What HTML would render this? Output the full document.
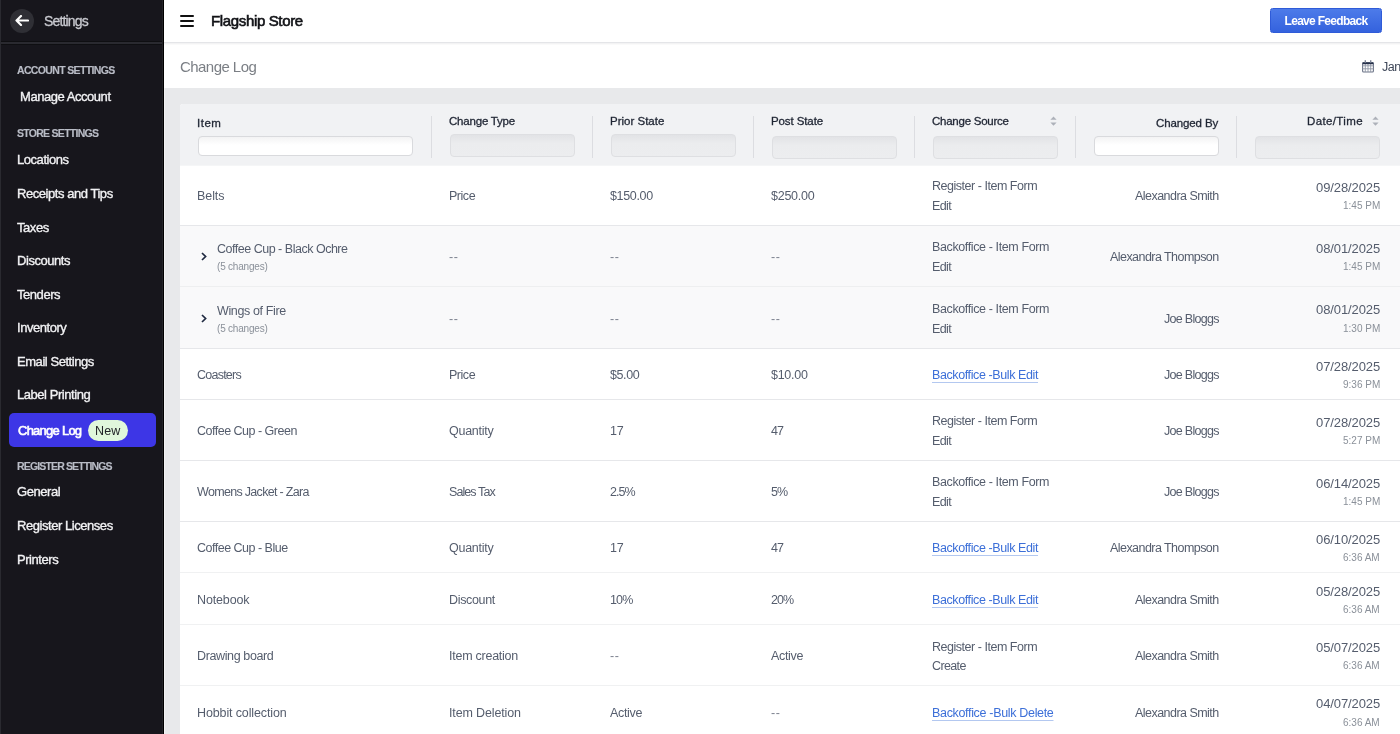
<!DOCTYPE html>
<html><head><meta charset="utf-8"><title>Change Log</title><style>
html,body{margin:0;padding:0;width:1400px;height:734px;overflow:hidden;background:#e8e9eb;}
body{position:relative;font-family:"Liberation Sans", sans-serif;}
.t{position:absolute;white-space:nowrap;will-change:transform;font-family:"Liberation Sans", sans-serif;}
</style></head>
<body>
<div style="position:absolute;left:0px;top:0px;width:164px;height:734px;background:#17161c;"></div>
<div style="position:absolute;left:162px;top:0px;width:1px;height:734px;background:#232328;"></div>
<div style="position:absolute;left:163px;top:0px;width:1px;height:734px;background:#000;"></div>
<div style="position:absolute;left:0px;top:0px;width:1px;height:734px;background:#2a2a30;"></div>
<div style="position:absolute;left:1px;top:41px;width:161px;height:1px;background:#0f0f12;"></div>
<div style="position:absolute;left:1px;top:42px;width:161px;height:2px;background:#2a2a30;"></div>
<div style="position:absolute;left:1px;top:44px;width:161px;height:1px;background:#0f0f12;"></div>
<div style="position:absolute;left:10px;top:9px;width:24px;height:24px;background:#2f2f35;border-radius:50%;"></div>
<svg style="position:absolute;left:15px;top:15px" width="14" height="11" viewBox="0 0 14 11"><path d="M6 1 L1.5 5.5 L6 10 M1.5 5.5 H13" stroke="#fff" stroke-width="2.2" fill="none" stroke-linejoin="round" stroke-linecap="round"/></svg>
<div class="t" style="top:13.819px;font-size:14px;line-height:14px;color:#c9cad0;letter-spacing:-0.85px;-webkit-text-stroke:0.3px #c9cad0;left:43.5px;">Settings</div>
<div class="t" style="top:64.614px;font-size:10.5px;line-height:10.5px;color:#b9bcc6;font-weight:700;letter-spacing:-0.65px;-webkit-text-stroke:0.15px #b9bcc6;left:17px;">ACCOUNT SETTINGS</div>
<div class="t" style="top:89.761px;font-size:13px;line-height:13px;color:#f2f2f4;letter-spacing:-0.45px;-webkit-text-stroke:0.35px #f2f2f4;left:20px;">Manage Account</div>
<div class="t" style="top:127.614px;font-size:10.5px;line-height:10.5px;color:#b9bcc6;font-weight:700;letter-spacing:-0.72px;-webkit-text-stroke:0.15px #b9bcc6;left:17px;">STORE SETTINGS</div>
<div class="t" style="top:152.761px;font-size:13px;line-height:13px;color:#f2f2f4;letter-spacing:-0.45px;-webkit-text-stroke:0.35px #f2f2f4;left:17px;">Locations</div>
<div class="t" style="top:186.761px;font-size:13px;line-height:13px;color:#f2f2f4;letter-spacing:-0.45px;-webkit-text-stroke:0.35px #f2f2f4;left:17px;">Receipts and Tips</div>
<div class="t" style="top:220.761px;font-size:13px;line-height:13px;color:#f2f2f4;letter-spacing:-0.45px;-webkit-text-stroke:0.35px #f2f2f4;left:17px;">Taxes</div>
<div class="t" style="top:253.761px;font-size:13px;line-height:13px;color:#f2f2f4;letter-spacing:-0.45px;-webkit-text-stroke:0.35px #f2f2f4;left:17px;">Discounts</div>
<div class="t" style="top:287.760px;font-size:13px;line-height:13px;color:#f2f2f4;letter-spacing:-0.45px;-webkit-text-stroke:0.35px #f2f2f4;left:17px;">Tenders</div>
<div class="t" style="top:320.760px;font-size:13px;line-height:13px;color:#f2f2f4;letter-spacing:-0.45px;-webkit-text-stroke:0.35px #f2f2f4;left:17px;">Inventory</div>
<div class="t" style="top:354.760px;font-size:13px;line-height:13px;color:#f2f2f4;letter-spacing:-0.45px;-webkit-text-stroke:0.35px #f2f2f4;left:17px;">Email Settings</div>
<div class="t" style="top:387.760px;font-size:13px;line-height:13px;color:#f2f2f4;letter-spacing:-0.45px;-webkit-text-stroke:0.35px #f2f2f4;left:17px;">Label Printing</div>
<div style="position:absolute;left:9px;top:413px;width:147px;height:34px;background:#3d36e6;border-radius:5px;"></div>
<div class="t" style="top:423.760px;font-size:13px;line-height:13px;color:#ffffff;letter-spacing:-0.75px;-webkit-text-stroke:0.6px #ffffff;left:17.5px;">Change Log</div>
<div style="position:absolute;left:88px;top:420px;width:40px;height:21px;background:#e0f7db;border-radius:11px;"></div>
<div class="t" style="top:424.731px;font-size:12.5px;line-height:12.5px;color:#222428;letter-spacing:0.1px;left:94.5px;">New</div>
<div class="t" style="top:460.614px;font-size:10.5px;line-height:10.5px;color:#b9bcc6;font-weight:700;letter-spacing:-0.85px;-webkit-text-stroke:0.15px #b9bcc6;left:17px;">REGISTER SETTINGS</div>
<div class="t" style="top:484.760px;font-size:13px;line-height:13px;color:#f2f2f4;letter-spacing:-0.45px;-webkit-text-stroke:0.35px #f2f2f4;left:17px;">General</div>
<div class="t" style="top:518.760px;font-size:13px;line-height:13px;color:#f2f2f4;letter-spacing:-0.45px;-webkit-text-stroke:0.35px #f2f2f4;left:17px;">Register Licenses</div>
<div class="t" style="top:552.760px;font-size:13px;line-height:13px;color:#f2f2f4;letter-spacing:-0.45px;-webkit-text-stroke:0.35px #f2f2f4;left:17px;">Printers</div>
<div style="position:absolute;left:164px;top:0px;width:1236px;height:42px;background:#fff;"></div>
<div style="position:absolute;left:164px;top:42px;width:1236px;height:1px;background:#e4e5e8;"></div>
<div style="position:absolute;left:180px;top:14.5px;width:14px;height:2px;background:#111;border-radius:1px;"></div>
<div style="position:absolute;left:180px;top:19.5px;width:14px;height:2px;background:#111;border-radius:1px;"></div>
<div style="position:absolute;left:180px;top:24.5px;width:14px;height:2px;background:#111;border-radius:1px;"></div>
<div class="t" style="top:12.877px;font-size:15px;line-height:15px;color:#111216;letter-spacing:-0.35px;-webkit-text-stroke:0.6px #111216;left:210.5px;">Flagship Store</div>
<div style="position:absolute;left:1270px;top:8px;width:112px;height:25px;box-sizing:border-box;border:1px solid #2f5bd8;border-radius:2.5px;background:linear-gradient(#4d7be9,#3462de);"></div>
<div class="t" style="top:14.702px;font-size:12px;line-height:12px;color:#ffffff;font-weight:700;letter-spacing:-0.7px;left:1270px;width:112px;text-align:center;">Leave Feedback</div>
<div style="position:absolute;left:164px;top:43px;width:1236px;height:45px;background:#fff;"></div>
<div style="position:absolute;left:164px;top:43px;width:1236px;height:1px;background:#f3f3f4;"></div>
<div style="position:absolute;left:164px;top:44px;width:1236px;height:1px;background:#fafafa;"></div>
<div class="t" style="top:58.877px;font-size:15px;line-height:15px;color:#7b7f85;letter-spacing:-0.55px;left:180px;">Change Log</div>
<svg style="position:absolute;left:1362px;top:59px" width="12" height="14" viewBox="0 0 12 14"><rect x="0.6" y="3.6" width="10.8" height="9.4" rx="1" fill="#fff" stroke="#6c7487" stroke-width="1.1"/><path d="M0.6 6.8H11.4M0.6 9.8H11.4M3.3 4V13M6 4V13M8.7 4V13" stroke="#8f96a5" stroke-width="0.9"/><rect x="0.6" y="3.4" width="10.8" height="1.8" fill="#25304a"/><rect x="2.6" y="1.2" width="1.4" height="2.6" fill="#7d8496"/><rect x="8" y="1.2" width="1.4" height="2.6" fill="#7d8496"/></svg>
<div class="t" style="top:60.731px;font-size:12.5px;line-height:12.5px;color:#3f4859;letter-spacing:-0.5px;left:1382px;">Jan</div>
<div style="position:absolute;left:164px;top:88px;width:1236px;height:646px;background:#e8e9eb;"></div>
<div style="position:absolute;left:164px;top:88px;width:1px;height:646px;background:#f2f2f3;"></div>
<div style="position:absolute;left:180px;top:104px;width:1220px;height:630px;background:#fff;border-top-left-radius:3px;"></div>
<div style="position:absolute;left:180px;top:104px;width:1220px;height:61px;background:#f1f2f4;border-top-left-radius:3px;"></div>
<div style="position:absolute;left:431px;top:116px;width:1px;height:41.5px;background:#dcdde1;"></div>
<div style="position:absolute;left:592px;top:116px;width:1px;height:41.5px;background:#dcdde1;"></div>
<div style="position:absolute;left:753px;top:116px;width:1px;height:41.5px;background:#dcdde1;"></div>
<div style="position:absolute;left:914px;top:116px;width:1px;height:41.5px;background:#dcdde1;"></div>
<div style="position:absolute;left:1075px;top:116px;width:1px;height:41.5px;background:#dcdde1;"></div>
<div style="position:absolute;left:1236px;top:116px;width:1px;height:41.5px;background:#dcdde1;"></div>
<div class="t" style="top:117.673px;font-size:11.5px;line-height:11.5px;color:#1f2533;letter-spacing:0.5px;-webkit-text-stroke:0.3px #1f2533;left:197px;">Item</div>
<div style="position:absolute;left:198px;top:136px;width:215px;height:19.5px;box-sizing:border-box;background:linear-gradient(#f3f3f4,#fff 45%);border:1px solid #d9dadd;border-radius:4px;"></div>
<div class="t" style="top:115.673px;font-size:11.5px;line-height:11.5px;color:#1f2533;letter-spacing:-0.2px;-webkit-text-stroke:0.3px #1f2533;left:449px;">Change Type</div>
<div style="position:absolute;left:449.5px;top:134.2px;width:125.5px;height:23.3px;box-sizing:border-box;background:linear-gradient(#e2e3e6,#ebecee 40%,#ecedef);border:1px solid #dedfe2;border-radius:4px;"></div>
<div class="t" style="top:115.673px;font-size:11.5px;line-height:11.5px;color:#1f2533;-webkit-text-stroke:0.3px #1f2533;left:610px;">Prior State</div>
<div style="position:absolute;left:610.5px;top:134.2px;width:125.5px;height:23.3px;box-sizing:border-box;background:linear-gradient(#e2e3e6,#ebecee 40%,#ecedef);border:1px solid #dedfe2;border-radius:4px;"></div>
<div class="t" style="top:115.673px;font-size:11.5px;line-height:11.5px;color:#1f2533;letter-spacing:-0.1px;-webkit-text-stroke:0.3px #1f2533;left:771px;">Post State</div>
<div style="position:absolute;left:771.5px;top:136px;width:125.5px;height:23.4px;box-sizing:border-box;background:linear-gradient(#e2e3e6,#ebecee 40%,#ecedef);border:1px solid #dedfe2;border-radius:4px;"></div>
<div class="t" style="top:115.673px;font-size:11.5px;line-height:11.5px;color:#1f2533;letter-spacing:-0.242px;-webkit-text-stroke:0.3px #1f2533;left:932px;">Change Source</div>
<div style="position:absolute;left:932.5px;top:136px;width:125.5px;height:23.4px;box-sizing:border-box;background:linear-gradient(#e2e3e6,#ebecee 40%,#ecedef);border:1px solid #dedfe2;border-radius:4px;"></div>
<div class="t" style="top:117.673px;font-size:11.5px;line-height:11.5px;color:#1f2533;letter-spacing:-0.111px;-webkit-text-stroke:0.3px #1f2533;right:181.70000000000005px;text-align:right;">Changed By</div>
<div style="position:absolute;left:1094px;top:136.3px;width:125px;height:19.3px;box-sizing:border-box;background:linear-gradient(#f3f3f4,#fff 45%);border:1px solid #d9dadd;border-radius:4px;"></div>
<div class="t" style="top:115.673px;font-size:11.5px;line-height:11.5px;color:#1f2533;letter-spacing:0.375px;-webkit-text-stroke:0.3px #1f2533;right:37.200000000000045px;text-align:right;">Date/Time</div>
<div style="position:absolute;left:1255px;top:136px;width:125px;height:23.4px;box-sizing:border-box;background:linear-gradient(#e2e3e6,#ebecee 40%,#ecedef);border:1px solid #dedfe2;border-radius:4px;"></div>
<svg style="position:absolute;left:1049.5px;top:116px" width="7" height="10" viewBox="0 0 7 10"><path d="M3.5 0.6L6.6 3.8H0.4Z M3.5 9.8L6.6 6.6H0.4Z" fill="#adb1b9"/></svg>
<svg style="position:absolute;left:1371.5px;top:116px" width="7" height="10" viewBox="0 0 7 10"><path d="M3.5 0.6L6.6 3.8H0.4Z M3.5 9.8L6.6 6.6H0.4Z" fill="#adb1b9"/></svg>
<div style="position:absolute;left:180px;top:165px;width:1220px;height:61px;background:#fff;"></div>
<div style="position:absolute;left:180px;top:225px;width:1220px;height:1px;background:#e6e7ea;"></div>
<div class="t" style="top:189.731px;font-size:12.5px;line-height:12.5px;color:#555d6d;letter-spacing:-0.075px;left:197px;">Belts</div>
<div class="t" style="top:189.731px;font-size:12.5px;line-height:12.5px;color:#555d6d;letter-spacing:-0.475px;left:448.8px;">Price</div>
<div class="t" style="top:189.731px;font-size:12.5px;line-height:12.5px;color:#555d6d;letter-spacing:-0.333px;left:610px;">$150.00</div>
<div class="t" style="top:189.731px;font-size:12.5px;line-height:12.5px;color:#555d6d;letter-spacing:-0.25px;left:771px;">$250.00</div>
<div class="t" style="top:179.731px;font-size:12.5px;line-height:12.5px;color:#555d6d;letter-spacing:-0.474px;left:932px;">Register - Item Form</div>
<div class="t" style="top:199.731px;font-size:12.5px;line-height:12.5px;color:#555d6d;letter-spacing:-0.633px;left:932px;">Edit</div>
<div class="t" style="top:189.731px;font-size:12.5px;line-height:12.5px;color:#555d6d;letter-spacing:-0.536px;right:181px;text-align:right;">Alexandra Smith</div>
<div class="t" style="top:180.761px;font-size:13px;line-height:13px;color:#555d6d;letter-spacing:-0.1px;right:20.200000000000045px;text-align:right;">09/28/2025</div>
<div class="t" style="top:200.585px;font-size:10px;line-height:10px;color:#8a9099;right:20.200000000000045px;text-align:right;">1:45 PM</div>
<div style="position:absolute;left:180px;top:226px;width:1220px;height:61px;background:#f9f9fa;"></div>
<div style="position:absolute;left:180px;top:286px;width:1220px;height:2px;background:#e6e7ea;opacity:0.6;"></div>
<svg style="position:absolute;left:200.5px;top:252px" width="6" height="9" viewBox="0 0 6 9"><path d="M1 1L4.6 4.5L1 8" stroke="#1f2940" stroke-width="1.7" fill="none"/></svg>
<div class="t" style="top:242.731px;font-size:12.5px;line-height:12.5px;color:#555d6d;letter-spacing:-0.487px;left:217.2px;">Coffee Cup - Black Ochre</div>
<div class="t" style="top:261.585px;font-size:10px;line-height:10px;color:#8a9099;letter-spacing:-0.2px;left:217.2px;">(5 changes)</div>
<div class="t" style="top:250.731px;font-size:12.5px;line-height:12.5px;color:#7d8390;letter-spacing:0.6px;left:448.8px;">--</div>
<div class="t" style="top:250.731px;font-size:12.5px;line-height:12.5px;color:#7d8390;letter-spacing:0.6px;left:610px;">--</div>
<div class="t" style="top:250.731px;font-size:12.5px;line-height:12.5px;color:#7d8390;letter-spacing:0.6px;left:771px;">--</div>
<div class="t" style="top:240.731px;font-size:12.5px;line-height:12.5px;color:#555d6d;letter-spacing:-0.381px;left:932px;">Backoffice - Item Form</div>
<div class="t" style="top:260.731px;font-size:12.5px;line-height:12.5px;color:#555d6d;letter-spacing:-0.633px;left:932px;">Edit</div>
<div class="t" style="top:250.731px;font-size:12.5px;line-height:12.5px;color:#555d6d;letter-spacing:-0.553px;right:181px;text-align:right;">Alexandra Thompson</div>
<div class="t" style="top:241.761px;font-size:13px;line-height:13px;color:#555d6d;letter-spacing:-0.1px;right:20.200000000000045px;text-align:right;">08/01/2025</div>
<div class="t" style="top:261.585px;font-size:10px;line-height:10px;color:#8a9099;right:20.200000000000045px;text-align:right;">1:45 PM</div>
<div style="position:absolute;left:180px;top:287px;width:1220px;height:62px;background:#f9f9fa;"></div>
<div style="position:absolute;left:180px;top:348px;width:1220px;height:1px;background:#e6e7ea;"></div>
<svg style="position:absolute;left:200.5px;top:314px" width="6" height="9" viewBox="0 0 6 9"><path d="M1 1L4.6 4.5L1 8" stroke="#1f2940" stroke-width="1.7" fill="none"/></svg>
<div class="t" style="top:304.731px;font-size:12.5px;line-height:12.5px;color:#555d6d;letter-spacing:-0.375px;left:217.2px;">Wings of Fire</div>
<div class="t" style="top:323.585px;font-size:10px;line-height:10px;color:#8a9099;letter-spacing:-0.2px;left:217.2px;">(5 changes)</div>
<div class="t" style="top:312.731px;font-size:12.5px;line-height:12.5px;color:#7d8390;letter-spacing:0.6px;left:448.8px;">--</div>
<div class="t" style="top:312.731px;font-size:12.5px;line-height:12.5px;color:#7d8390;letter-spacing:0.6px;left:610px;">--</div>
<div class="t" style="top:312.731px;font-size:12.5px;line-height:12.5px;color:#7d8390;letter-spacing:0.6px;left:771px;">--</div>
<div class="t" style="top:302.731px;font-size:12.5px;line-height:12.5px;color:#555d6d;letter-spacing:-0.381px;left:932px;">Backoffice - Item Form</div>
<div class="t" style="top:322.731px;font-size:12.5px;line-height:12.5px;color:#555d6d;letter-spacing:-0.633px;left:932px;">Edit</div>
<div class="t" style="top:312.731px;font-size:12.5px;line-height:12.5px;color:#555d6d;letter-spacing:-0.711px;right:181px;text-align:right;">Joe Bloggs</div>
<div class="t" style="top:302.760px;font-size:13px;line-height:13px;color:#555d6d;letter-spacing:-0.1px;right:20.200000000000045px;text-align:right;">08/01/2025</div>
<div class="t" style="top:323.585px;font-size:10px;line-height:10px;color:#8a9099;right:20.200000000000045px;text-align:right;">1:30 PM</div>
<div style="position:absolute;left:180px;top:349px;width:1220px;height:51px;background:#fff;"></div>
<div style="position:absolute;left:180px;top:399px;width:1220px;height:1px;background:#e6e7ea;"></div>
<div class="t" style="top:368.731px;font-size:12.5px;line-height:12.5px;color:#555d6d;letter-spacing:-0.757px;left:197px;">Coasters</div>
<div class="t" style="top:368.731px;font-size:12.5px;line-height:12.5px;color:#555d6d;letter-spacing:-0.475px;left:448.8px;">Price</div>
<div class="t" style="top:368.731px;font-size:12.5px;line-height:12.5px;color:#555d6d;letter-spacing:-0.4px;left:610px;">$5.00</div>
<div class="t" style="top:368.731px;font-size:12.5px;line-height:12.5px;color:#555d6d;letter-spacing:-0.28px;left:771px;">$10.00</div>
<div class="t" style="top:368.731px;font-size:12.5px;line-height:12.5px;color:#3c6fd8;letter-spacing:-0.4px;left:932px;text-decoration:underline;text-decoration-color:#b3c8f0;text-decoration-thickness:1.4px;text-underline-offset:2.5px;">Backoffice -Bulk Edit</div>
<div class="t" style="top:368.731px;font-size:12.5px;line-height:12.5px;color:#555d6d;letter-spacing:-0.711px;right:181px;text-align:right;">Joe Bloggs</div>
<div class="t" style="top:359.760px;font-size:13px;line-height:13px;color:#555d6d;letter-spacing:-0.1px;right:20.200000000000045px;text-align:right;">07/28/2025</div>
<div class="t" style="top:379.585px;font-size:10px;line-height:10px;color:#8a9099;right:20.200000000000045px;text-align:right;">9:36 PM</div>
<div style="position:absolute;left:180px;top:400px;width:1220px;height:61px;background:#fff;"></div>
<div style="position:absolute;left:180px;top:460px;width:1220px;height:1px;background:#e6e7ea;"></div>
<div class="t" style="top:424.731px;font-size:12.5px;line-height:12.5px;color:#555d6d;letter-spacing:-0.5px;left:197px;">Coffee Cup - Green</div>
<div class="t" style="top:424.731px;font-size:12.5px;line-height:12.5px;color:#555d6d;letter-spacing:-0.271px;left:448.8px;">Quantity</div>
<div class="t" style="top:424.731px;font-size:12.5px;line-height:12.5px;color:#555d6d;letter-spacing:-0.1px;left:610px;">17</div>
<div class="t" style="top:424.731px;font-size:12.5px;line-height:12.5px;color:#555d6d;letter-spacing:-0.95px;left:771px;">47</div>
<div class="t" style="top:414.731px;font-size:12.5px;line-height:12.5px;color:#555d6d;letter-spacing:-0.474px;left:932px;">Register - Item Form</div>
<div class="t" style="top:434.731px;font-size:12.5px;line-height:12.5px;color:#555d6d;letter-spacing:-0.633px;left:932px;">Edit</div>
<div class="t" style="top:424.731px;font-size:12.5px;line-height:12.5px;color:#555d6d;letter-spacing:-0.711px;right:181px;text-align:right;">Joe Bloggs</div>
<div class="t" style="top:415.760px;font-size:13px;line-height:13px;color:#555d6d;letter-spacing:-0.1px;right:20.200000000000045px;text-align:right;">07/28/2025</div>
<div class="t" style="top:435.585px;font-size:10px;line-height:10px;color:#8a9099;right:20.200000000000045px;text-align:right;">5:27 PM</div>
<div style="position:absolute;left:180px;top:461px;width:1220px;height:61px;background:#fff;"></div>
<div style="position:absolute;left:180px;top:521px;width:1220px;height:1px;background:#e6e7ea;"></div>
<div class="t" style="top:485.731px;font-size:12.5px;line-height:12.5px;color:#555d6d;letter-spacing:-0.684px;left:197px;">Womens Jacket - Zara</div>
<div class="t" style="top:485.731px;font-size:12.5px;line-height:12.5px;color:#555d6d;letter-spacing:-0.912px;left:448.8px;">Sales Tax</div>
<div class="t" style="top:485.731px;font-size:12.5px;line-height:12.5px;color:#555d6d;letter-spacing:-0.95px;left:610px;">2.5%</div>
<div class="t" style="top:485.731px;font-size:12.5px;line-height:12.5px;color:#555d6d;letter-spacing:-0.95px;left:771px;">5%</div>
<div class="t" style="top:475.731px;font-size:12.5px;line-height:12.5px;color:#555d6d;letter-spacing:-0.381px;left:932px;">Backoffice - Item Form</div>
<div class="t" style="top:495.731px;font-size:12.5px;line-height:12.5px;color:#555d6d;letter-spacing:-0.633px;left:932px;">Edit</div>
<div class="t" style="top:485.731px;font-size:12.5px;line-height:12.5px;color:#555d6d;letter-spacing:-0.711px;right:181px;text-align:right;">Joe Bloggs</div>
<div class="t" style="top:476.760px;font-size:13px;line-height:13px;color:#555d6d;letter-spacing:-0.1px;right:20.200000000000045px;text-align:right;">06/14/2025</div>
<div class="t" style="top:496.585px;font-size:10px;line-height:10px;color:#8a9099;right:20.200000000000045px;text-align:right;">1:45 PM</div>
<div style="position:absolute;left:180px;top:522px;width:1220px;height:51px;background:#fff;"></div>
<div style="position:absolute;left:180px;top:572px;width:1220px;height:2px;background:#e6e7ea;opacity:0.6;"></div>
<div class="t" style="top:541.731px;font-size:12.5px;line-height:12.5px;color:#555d6d;letter-spacing:-0.5px;left:197px;">Coffee Cup - Blue</div>
<div class="t" style="top:541.731px;font-size:12.5px;line-height:12.5px;color:#555d6d;letter-spacing:-0.271px;left:448.8px;">Quantity</div>
<div class="t" style="top:541.731px;font-size:12.5px;line-height:12.5px;color:#555d6d;letter-spacing:-0.1px;left:610px;">17</div>
<div class="t" style="top:541.731px;font-size:12.5px;line-height:12.5px;color:#555d6d;letter-spacing:-0.95px;left:771px;">47</div>
<div class="t" style="top:541.731px;font-size:12.5px;line-height:12.5px;color:#3c6fd8;letter-spacing:-0.4px;left:932px;text-decoration:underline;text-decoration-color:#b3c8f0;text-decoration-thickness:1.4px;text-underline-offset:2.5px;">Backoffice -Bulk Edit</div>
<div class="t" style="top:541.731px;font-size:12.5px;line-height:12.5px;color:#555d6d;letter-spacing:-0.553px;right:181px;text-align:right;">Alexandra Thompson</div>
<div class="t" style="top:532.760px;font-size:13px;line-height:13px;color:#555d6d;letter-spacing:-0.1px;right:20.200000000000045px;text-align:right;">06/10/2025</div>
<div class="t" style="top:552.585px;font-size:10px;line-height:10px;color:#8a9099;right:20.200000000000045px;text-align:right;">6:36 AM</div>
<div style="position:absolute;left:180px;top:573px;width:1220px;height:52px;background:#fff;"></div>
<div style="position:absolute;left:180px;top:624px;width:1220px;height:2px;background:#e6e7ea;opacity:0.6;"></div>
<div class="t" style="top:593.731px;font-size:12.5px;line-height:12.5px;color:#555d6d;letter-spacing:-0.143px;left:197px;">Notebook</div>
<div class="t" style="top:593.731px;font-size:12.5px;line-height:12.5px;color:#555d6d;letter-spacing:-0.329px;left:448.8px;">Discount</div>
<div class="t" style="top:593.731px;font-size:12.5px;line-height:12.5px;color:#555d6d;letter-spacing:-0.85px;left:610px;">10%</div>
<div class="t" style="top:593.731px;font-size:12.5px;line-height:12.5px;color:#555d6d;letter-spacing:-0.95px;left:771px;">20%</div>
<div class="t" style="top:593.731px;font-size:12.5px;line-height:12.5px;color:#3c6fd8;letter-spacing:-0.4px;left:932px;text-decoration:underline;text-decoration-color:#b3c8f0;text-decoration-thickness:1.4px;text-underline-offset:2.5px;">Backoffice -Bulk Edit</div>
<div class="t" style="top:593.731px;font-size:12.5px;line-height:12.5px;color:#555d6d;letter-spacing:-0.536px;right:181px;text-align:right;">Alexandra Smith</div>
<div class="t" style="top:584.760px;font-size:13px;line-height:13px;color:#555d6d;letter-spacing:-0.1px;right:20.200000000000045px;text-align:right;">05/28/2025</div>
<div class="t" style="top:604.585px;font-size:10px;line-height:10px;color:#8a9099;right:20.200000000000045px;text-align:right;">6:36 AM</div>
<div style="position:absolute;left:180px;top:625px;width:1220px;height:61px;background:#fff;"></div>
<div style="position:absolute;left:180px;top:685px;width:1220px;height:2px;background:#e6e7ea;opacity:0.6;"></div>
<div class="t" style="top:649.731px;font-size:12.5px;line-height:12.5px;color:#555d6d;letter-spacing:-0.375px;left:197px;">Drawing board</div>
<div class="t" style="top:649.731px;font-size:12.5px;line-height:12.5px;color:#555d6d;letter-spacing:-0.25px;left:448.8px;">Item creation</div>
<div class="t" style="top:649.731px;font-size:12.5px;line-height:12.5px;color:#7d8390;letter-spacing:0.6px;left:610px;">--</div>
<div class="t" style="top:649.731px;font-size:12.5px;line-height:12.5px;color:#555d6d;letter-spacing:-0.34px;left:771px;">Active</div>
<div class="t" style="top:640.731px;font-size:12.5px;line-height:12.5px;color:#555d6d;letter-spacing:-0.474px;left:932px;">Register - Item Form</div>
<div class="t" style="top:659.731px;font-size:12.5px;line-height:12.5px;color:#555d6d;letter-spacing:-0.62px;left:932px;">Create</div>
<div class="t" style="top:649.731px;font-size:12.5px;line-height:12.5px;color:#555d6d;letter-spacing:-0.536px;right:181px;text-align:right;">Alexandra Smith</div>
<div class="t" style="top:640.760px;font-size:13px;line-height:13px;color:#555d6d;letter-spacing:-0.1px;right:20.200000000000045px;text-align:right;">05/07/2025</div>
<div class="t" style="top:660.585px;font-size:10px;line-height:10px;color:#8a9099;right:20.200000000000045px;text-align:right;">6:36 AM</div>
<div style="position:absolute;left:180px;top:686px;width:1220px;height:52px;background:#fff;"></div>
<div style="position:absolute;left:180px;top:737px;width:1220px;height:1px;background:#e6e7ea;"></div>
<div class="t" style="top:706.731px;font-size:12.5px;line-height:12.5px;color:#555d6d;letter-spacing:-0.125px;left:197px;">Hobbit collection</div>
<div class="t" style="top:706.731px;font-size:12.5px;line-height:12.5px;color:#555d6d;letter-spacing:-0.142px;left:448.8px;">Item Deletion</div>
<div class="t" style="top:706.731px;font-size:12.5px;line-height:12.5px;color:#555d6d;letter-spacing:-0.34px;left:610px;">Active</div>
<div class="t" style="top:706.731px;font-size:12.5px;line-height:12.5px;color:#7d8390;letter-spacing:0.6px;left:771px;">--</div>
<div class="t" style="top:706.731px;font-size:12.5px;line-height:12.5px;color:#3c6fd8;letter-spacing:-0.327px;left:932px;text-decoration:underline;text-decoration-color:#b3c8f0;text-decoration-thickness:1.4px;text-underline-offset:2.5px;">Backoffice -Bulk Delete</div>
<div class="t" style="top:706.731px;font-size:12.5px;line-height:12.5px;color:#555d6d;letter-spacing:-0.536px;right:181px;text-align:right;">Alexandra Smith</div>
<div class="t" style="top:696.760px;font-size:13px;line-height:13px;color:#555d6d;letter-spacing:-0.1px;right:20.200000000000045px;text-align:right;">04/07/2025</div>
<div class="t" style="top:717.585px;font-size:10px;line-height:10px;color:#8a9099;right:20.200000000000045px;text-align:right;">6:36 AM</div>
<div style="position:absolute;left:180px;top:165px;width:1220px;height:1px;background:#f5f6f7;"></div>
</body></html>
